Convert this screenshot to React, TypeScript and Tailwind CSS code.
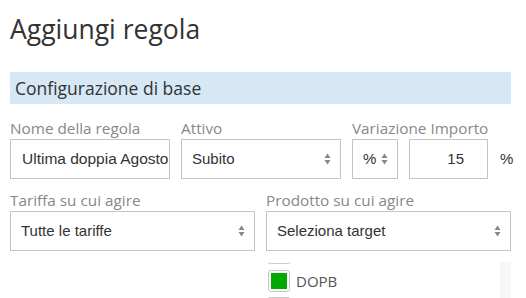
import type { ReactNode } from "react";

const sans = "font-['Open_Sans',sans-serif]";
const field = "font-['Liberation_Sans',Arial,sans-serif]";

function Arrows() {
  return (
    <svg width="7" height="12" viewBox="0 0 7 12" className="shrink-0">
      <path d="M3.5 0.5 L6.5 5 L0.5 5 Z" fill="#888" />
      <path d="M3.5 11.5 L6.5 7 L0.5 7 Z" fill="#888" />
    </svg>
  );
}

function Label({ children }: { children: ReactNode }) {
  return (
    <div className={`${sans} h-[22px] whitespace-nowrap text-[15.3px] leading-[22px] text-[#888]`}>
      {children}
    </div>
  );
}

function Select({ value, className = "" }: { value: string; className?: string }) {
  return (
    <div
      className={`${field} flex h-10 items-center justify-between border border-[#c4c4c4] bg-white pl-[10px] pr-[9px] text-[15px] text-[#333]`
        + ` ${className}`}
    >
      <span className="whitespace-nowrap">{value}</span>
      <Arrows />
    </div>
  );
}

export default function App() {
  return (
    <div className="h-[298px] w-[526px] overflow-hidden bg-white pl-[10px]">
      <h1 className={`${sans} pt-[14px] text-[26.5px] leading-[30px] text-[#333]`}>Aggiungi regola</h1>

      <div className={`${sans} mt-[28px] h-8 w-[501px] bg-[#d6e7f5] pl-[5px] text-[17.5px] leading-8 text-[#333]`}>
        Configurazione di base
      </div>

      <div className="mt-[13px] grid w-[501px] grid-cols-[160px_160px_1fr] gap-x-[11px]">
        <div>
          <Label>Nome della regola</Label>
          <div
            className={`${field} flex h-10 items-center overflow-hidden whitespace-nowrap border border-[#c4c4c4] pl-[11px] text-[15.5px] text-[#333]`}
          >
            Ultima doppia Agosto
          </div>
        </div>
        <div>
          <Label>Attivo</Label>
          <Select value="Subito" />
        </div>
        <div>
          <Label>Variazione Importo</Label>
          <div className="flex items-center">
            <Select value="%" className="w-[46px]" />
            <div
              className={`${field} ml-[11px] flex h-10 w-[79px] items-center justify-end border border-[#c4c4c4] pr-[23px] text-[15px] text-[#333]`}
            >
              15
            </div>
            <span className={`${field} ml-[12px] text-[15px] text-[#333]`}>%</span>
          </div>
        </div>
      </div>

      <div className="mt-[10px] grid w-[501px] grid-cols-2 gap-x-[11px]">
        <div>
          <Label>Tariffa su cui agire</Label>
          <Select value="Tutte le tariffe" />
        </div>
        <div>
          <Label>Prodotto su cui agire</Label>
          <Select value="Seleziona target" />
          <div className="mt-[11px] flex h-[36px] justify-between">
            <div className="pl-[2px]">
              <div className="h-[2px] w-[22px] rounded-b-[3px] border-x border-b border-[#ccc]" />
              <div className="mt-[6px] flex items-center gap-[6px]">
                <div className="flex h-[22px] w-[22px] items-center justify-center rounded-[3px] border border-[#c8c8c8] bg-white">
                  <div className="h-[16px] w-[16px] bg-[#00aa00]" />
                </div>
                <span className={`${sans} text-[15px] text-[#555]`}>DOPB</span>
              </div>
              <div className="mt-[4px] h-[2px] w-[22px] rounded-t-[3px] border-x border-t border-[#ccc]" />
            </div>
            <div className="w-[11px] bg-[#f7f7f7]" />
          </div>
        </div>
      </div>
    </div>
  );
}
